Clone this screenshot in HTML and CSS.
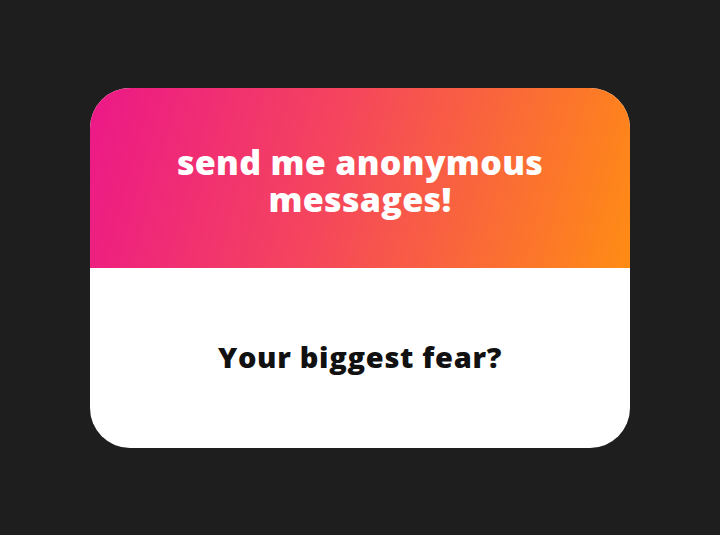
FILE: index.html
```html
<!DOCTYPE html>
<html>
<head>
<meta charset="utf-8">
<link rel="stylesheet" href="styles.css">
</head>
<body>
<div class="stage">
  <div class="card">
    <div class="card-head">
      <h1 class="title">send me anonymous messages!</h1>
    </div>
    <div class="card-body">
      <p class="question">Your biggest fear?</p>
    </div>
  </div>
</div>
</body>
</html>
```
FILE: styles.css
```css
html, body {
  margin: 0;
  padding: 0;
  background: #1e1e1e;
}
.stage {
  width: 720px;
  height: 535px;
  display: flex;
  align-items: center;
  justify-content: center;
}
.card {
  width: 540px;
  height: 360px;
  border-radius: 40px;
  overflow: hidden;
  display: flex;
  flex-direction: column;
  background: #fff;
}
.card-head {
  height: 180px;
  box-sizing: border-box;
  padding-top: 7px;
  display: flex;
  align-items: center;
  justify-content: center;
  background: linear-gradient(105deg, #ec1888 0%, #f5465c 45%, #ff8c14 100%);
}
.title {
  margin: 0;
  width: 400px;
  text-align: center;
  color: #fff;
  font-family: "Open Sans", "Liberation Sans", sans-serif;
  font-weight: 800;
  font-size: 34px;
  line-height: 37px;
  letter-spacing: 0.3px;
}
.card-body {
  flex: 1;
  display: flex;
  align-items: center;
  justify-content: center;
  padding-bottom: 3px;
}
.question {
  margin: 0;
  color: #111;
  font-family: "Open Sans", "Liberation Sans", sans-serif;
  font-weight: 800;
  font-size: 29px;
  letter-spacing: 0.7px;
}
```
